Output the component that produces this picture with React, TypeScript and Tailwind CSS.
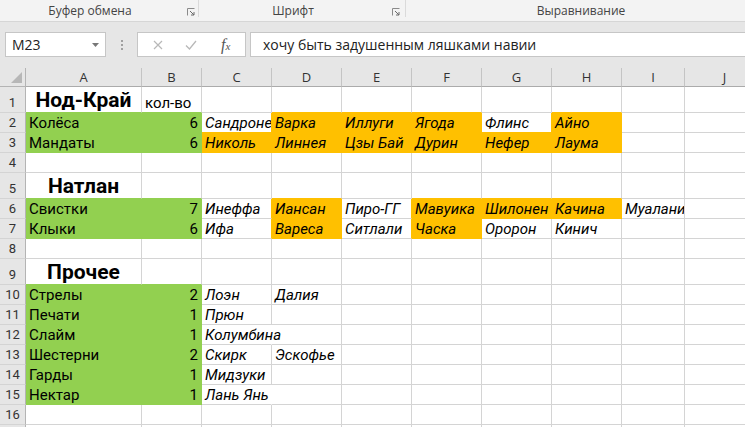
import clsx from 'clsx';

type Fill = 'G' | 'O';

interface Cell {
  t: string;
  f?: Fill;
  i?: boolean; // italic name
  title?: boolean;
  num?: boolean;
  over?: boolean; // text spills into the empty cell on the right
}

interface Row {
  n: number;
  tall?: boolean;
  hideNum?: boolean;
  cells: Record<string, Cell>;
}

const COLS = [
  { k: 'A', w: 'w-[116px]' },
  { k: 'B', w: 'w-[60px]' },
  { k: 'C', w: 'w-[70px]' },
  { k: 'D', w: 'w-[70px]' },
  { k: 'E', w: 'w-[70px]' },
  { k: 'F', w: 'w-[70px]' },
  { k: 'G', w: 'w-[70px]' },
  { k: 'H', w: 'w-[70px]' },
  { k: 'I', w: 'w-[63px]' },
  { k: 'J', w: 'w-[80px]' },
];

const g = (t: string): Cell => ({ t, f: 'G' });
const gn = (t: string): Cell => ({ t, f: 'G', num: true });
const o = (t: string): Cell => ({ t, f: 'O', i: true });
const w = (t: string): Cell => ({ t, i: true });

const ROWS: Row[] = [
  { n: 1, tall: true, cells: { A: { t: 'Нод-Край', title: true }, B: { t: 'кол-во' } } },
  {
    n: 2,
    cells: { A: g('Колёса'), B: gn('6'), C: w('Сандроне'), D: o('Варка'), E: o('Иллуги'), F: o('Ягода'), G: w('Флинс'), H: o('Айно') },
  },
  {
    n: 3,
    cells: { A: g('Мандаты'), B: gn('6'), C: o('Николь'), D: o('Линнея'), E: o('Цзы Бай'), F: o('Дурин'), G: o('Нефер'), H: o('Лаума') },
  },
  { n: 4, cells: {} },
  { n: 5, tall: true, cells: { A: { t: 'Натлан', title: true } } },
  {
    n: 6,
    cells: {
      A: g('Свистки'), B: gn('7'), C: w('Инеффа'), D: o('Иансан'), E: w('Пиро-ГГ'),
      F: o('Мавуика'), G: o('Шилонен'), H: o('Качина'), I: w('Муалани'),
    },
  },
  {
    n: 7,
    cells: { A: g('Клыки'), B: gn('6'), C: w('Ифа'), D: o('Вареса'), E: w('Ситлали'), F: o('Часка'), G: w('Оророн'), H: w('Кинич') },
  },
  { n: 8, cells: {} },
  { n: 9, tall: true, cells: { A: { t: 'Прочее', title: true } } },
  { n: 10, cells: { A: g('Стрелы'), B: gn('2'), C: w('Лоэн'), D: w('Далия') } },
  { n: 11, cells: { A: g('Печати'), B: gn('1'), C: w('Прюн') } },
  { n: 12, cells: { A: g('Слайм'), B: gn('1'), C: { t: 'Колумбина', i: true, over: true } } },
  { n: 13, cells: { A: g('Шестерни'), B: gn('2'), C: w('Скирк'), D: w('Эскофье') } },
  { n: 14, cells: { A: g('Гарды'), B: gn('1'), C: w('Мидзуки') } },
  { n: 15, cells: { A: g('Нектар'), B: gn('1'), C: { t: 'Лань Янь', i: true, over: true } } },
  { n: 16, cells: {} },
  // only the top edge of row 17 is on screen
  { n: 17, hideNum: true, cells: {} },
];

const BG: Record<Fill, string> = { G: 'bg-[#92d050]', O: 'bg-[#ffc000]' };
const BR = { G: 'border-r-[#92d050]', O: 'border-r-[#ffc000]', grid: 'border-r-[#d4d4d4]', none: 'border-r-white' };
const BB = { G: 'border-b-[#92d050]', O: 'border-b-[#ffc000]', grid: 'border-b-[#d4d4d4]' };

function fillAt(r: number, c: number): Fill | undefined {
  const row = ROWS[r];
  const col = COLS[c];
  if (!row || !col) return undefined;
  return row.cells[col.k]?.f;
}

function Launcher() {
  return (
    <svg width="8" height="8" viewBox="0 0 8 8" className="shrink-0">
      <path d="M0.5 7.5V0.5H7.5" fill="none" stroke="#8a8a8a" strokeWidth="1" />
      <path d="M3 3L7 7M7 4V7H4" fill="none" stroke="#6a6a6a" strokeWidth="1" />
    </svg>
  );
}

function Ribbon() {
  return (
    <div className="flex h-[22px] border-b border-[#d6d6d6] bg-[#f3f3f3] text-[12px] text-[#444]">
      <div className="flex w-[199px] shrink-0 items-center">
        <div className="w-[180px] text-center leading-none">Буфер обмена</div>
        <div className="mt-[3px] ml-[7px]"><Launcher /></div>
        <div className="ml-auto h-[17px] w-px self-start bg-[#dadada]" />
      </div>
      <div className="flex w-[207px] shrink-0 items-center">
        <div className="w-[188px] text-center leading-none">Шрифт</div>
        <div className="mt-[3px] ml-[5px]"><Launcher /></div>
        <div className="ml-auto h-[17px] w-px self-start bg-[#dadada]" />
      </div>
      <div className="flex w-[350px] shrink-0 items-center">
        <div className="w-[350px] text-center leading-none">Выравнивание</div>
      </div>
    </div>
  );
}

function FormulaBar() {
  return (
    <div className="flex h-[46px] items-start bg-[#e6e6e6] pt-[10px] pl-[5px]">
      <div className="flex h-[25px] w-[101px] shrink-0 items-center border border-[#c6c6c6] bg-white pl-[6px] pr-[6px] text-[14px] text-[#222]">
        <span>M23</span>
        <svg width="7" height="4" viewBox="0 0 7 4" className="ml-auto">
          <path d="M0 0H7L3.5 4Z" fill="#777" />
        </svg>
      </div>
      <div className="flex h-[25px] w-[31px] shrink-0 flex-col items-center justify-center gap-[2px]">
        <span className="h-[2px] w-[2px] bg-[#a0a0a0]" />
        <span className="h-[2px] w-[2px] bg-[#a0a0a0]" />
        <span className="h-[2px] w-[2px] bg-[#a0a0a0]" />
      </div>
      <div className="flex h-[25px] w-[109px] shrink-0 items-center border border-[#c6c6c6] bg-white">
        <svg width="10" height="10" viewBox="0 0 10 10" className="ml-[15px]">
          <path d="M1 1L9 9M9 1L1 9" stroke="#b8b8b8" strokeWidth="1.2" />
        </svg>
        <svg width="12" height="10" viewBox="0 0 12 10" className="ml-[22px]">
          <path d="M1 5.5L4.5 9L11 1" fill="none" stroke="#b8b8b8" strokeWidth="1.3" />
        </svg>
        <span className="ml-[24px] font-['Liberation_Serif',serif] text-[16px] italic text-[#555]">
          f<span className="text-[11px]">x</span>
        </span>
      </div>
      <div className="ml-[4px] flex h-[25px] flex-1 items-center border border-r-0 border-[#c6c6c6] bg-white pl-[12px] text-[14px] text-[#222]">
        хочу быть задушенным ляшками навии
      </div>
    </div>
  );
}

function HeaderRow() {
  return (
    <div className="flex h-[19px] bg-[#e6e6e6] text-[13px] text-[#333]">
      <div className="relative w-[26px] shrink-0 border-r border-b border-[#b4b4b4]">
        <svg width="11" height="11" viewBox="0 0 11 11" className="absolute right-[3px] bottom-[3px]">
          <path d="M11 0V11H0Z" fill="#b7b7b7" />
        </svg>
      </div>
      {COLS.map((c) => (
        <div
          key={c.k}
          className={clsx(c.w, 'flex shrink-0 items-end justify-center border-r border-b border-r-[#c4c4c4] border-b-[#ababab] pb-[1px] leading-[16px]')}
        >
          {c.k}
        </div>
      ))}
    </div>
  );
}

function SheetRow({ row, r }: { row: Row; r: number }) {
  const h = row.tall ? 'h-[26px]' : 'h-[20px]';
  return (
    <div className="flex">
      <div
        className={clsx(
          h,
          'flex w-[26px] shrink-0 items-end justify-center border-r border-b border-r-[#b4b4b4] border-b-[#d4d4d4] bg-[#e6e6e6] pb-[1px] text-[13px] leading-[17px] text-[#333]',
        )}
      >
        {!row.hideNum && row.n}
      </div>
      {COLS.map((c, ci) => {
        const cell = row.cells[c.k];
        const fill = cell?.f;
        const right = fill ?? fillAt(r, ci + 1);
        const below = fill ?? fillAt(r + 1, ci);
        const br = cell?.over ? BR.none : right ? BR[right] : BR.grid;
        const bb = below ? BB[below] : BB.grid;
        return (
          <div
            key={c.k}
            className={clsx(
              c.w,
              h,
              br,
              bb,
              fill ? BG[fill] : 'bg-white',
              'relative flex shrink-0 items-end border-r border-b',
              cell?.over ? 'z-10 overflow-visible' : 'overflow-hidden',
              cell?.title && 'justify-center',
              cell?.num && 'justify-end',
            )}
          >
            {cell && (
              <span
                className={clsx(
                  'whitespace-nowrap px-[3px] text-black',
                  cell.title ? 'text-[21px] leading-[24px] font-bold' : 'text-[15px] leading-[18px]',
                  cell.i && 'italic',
                )}
              >
                {cell.t}
              </span>
            )}
          </div>
        );
      })}
    </div>
  );
}

export default function App() {
  return (
    <div className="h-[427px] w-[745px] overflow-hidden bg-white font-['Open_Sans',sans-serif]">
      <Ribbon />
      <FormulaBar />
      <HeaderRow />
      <div className="font-['Roboto',sans-serif]">
        {ROWS.map((row, r) => (
          <SheetRow key={row.n} row={row} r={r} />
        ))}
      </div>
    </div>
  );
}
